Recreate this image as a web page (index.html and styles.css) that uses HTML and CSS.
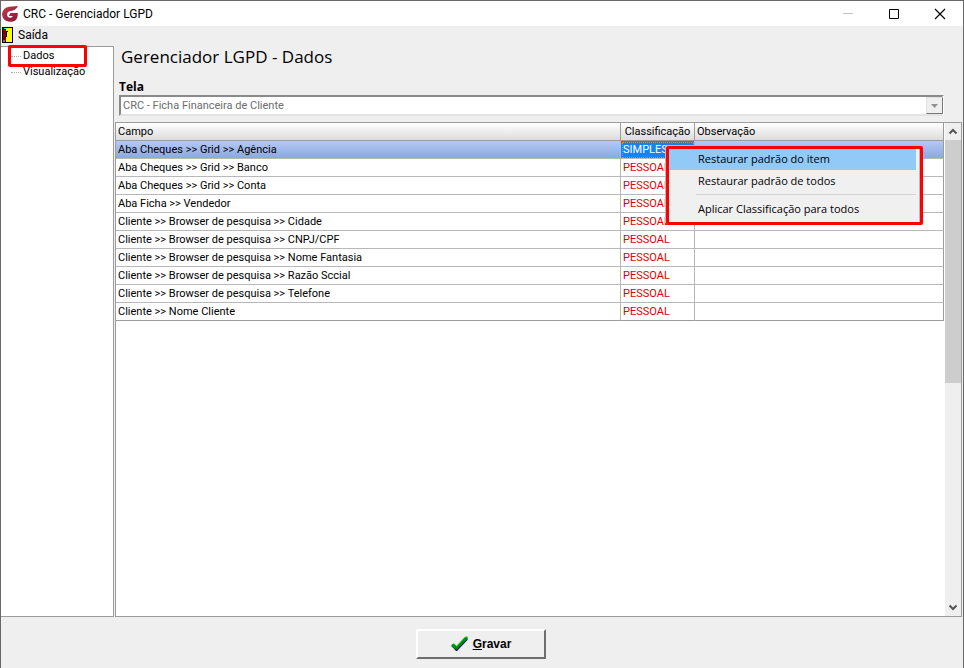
FILE: index.html
```html
<!DOCTYPE html>
<html lang="pt-BR">
<head>
<meta charset="utf-8">
<title>CRC - Gerenciador LGPD</title>
<link rel="stylesheet" href="styles.css">
</head>
<body>
<div class="window">
  <header class="titlebar">
    <svg class="logo" viewBox="0 0 16 16" aria-hidden="true">
      <defs><linearGradient id="g" x1="0" y1="0" x2="1" y2="1"><stop offset="0" stop-color="#c23a50"/><stop offset="1" stop-color="#8c1438"/></linearGradient></defs>
      <path fill="url(#g)" d="M15.800 0C12 .8 8 0 4.500 1.500C.2 3.500-.8 8 .8 11.500C2.500 15.500 7.500 16.500 11 15.500C14.800 14.500 15.800 11.500 15.800 7L8.500 7L6.800 10L10.800 10C10 12 7.500 12.300 6 11C4.500 9.500 4.900 6.500 7 5.500C9 4.700 14 5 15.800 0Z"/>
    </svg>
    <span class="caption">CRC - Gerenciador LGPD</span>
    <div class="controls">
      <button type="button" aria-label="Minimizar" disabled><svg viewBox="0 0 12 12"><path d="M1 5.500H11" stroke="#c4c4c4"/></svg></button>
      <button type="button" aria-label="Maximizar"><svg viewBox="0 0 12 12"><path d="M1.500 1.500H10.500V10.500H1.500Z" fill="none" stroke="#000"/></svg></button>
      <button type="button" aria-label="Fechar"><svg viewBox="0 0 12 12"><path d="M1 1L11 11M11 1L1 11" stroke="#000" stroke-width="1.200"/></svg></button>
    </div>
  </header>
  <nav class="menubar">
    <button type="button">
      <svg viewBox="0 0 11 16" shape-rendering="crispEdges" aria-hidden="true">
        <path d="M0 0H11V16H0Z"/><path d="M4 1H10V15H4Z" fill="#ff0"/><path d="M2 1H4V2H2Z" fill="#00e0e0"/><path d="M1 2H3V3H4V14H3V13H1Z" fill="#800010"/><path d="M4 4H6V5H5V10H4Z"/><path d="M1 13H3V15H1Z" fill="#777"/>
      </svg>
      <span>Saída</span>
    </button>
  </nav>
  <div class="workspace">
    <aside class="tree">
      <ul>
        <li><a href="#dados" class="marked">Dados</a></li>
        <li><a href="#visualizacao">Visualização</a></li>
      </ul>
    </aside>
    <main class="content">
      <section class="screen-form">
        <h1>Gerenciador LGPD - Dados</h1>
        <label for="tela">Tela</label>
        <div class="combo">
          <select id="tela" disabled><option>CRC - Ficha Financeira de Cliente</option></select>
          <span class="combo-arrow"><svg viewBox="0 0 7 4"><path d="M0 0H7L3.500 4Z" fill="#929292"/></svg></span>
        </div>
      </section>
      <section class="grid">
        <div class="grid-body">
          <table>
            <colgroup><col><col class="col-class"><col class="col-obs"></colgroup>
            <thead><tr><th>Campo</th><th class="center">Classificação</th><th>Observação</th></tr></thead>
            <tbody>
              <tr class="selected"><td>Aba Cheques &gt;&gt; Grid &gt;&gt; Agência</td>
                <td class="active">SIMPLES
                  <div class="popup" role="menu">
                    <button type="button" role="menuitem" class="hot">Restaurar padrão do item</button>
                    <button type="button" role="menuitem">Restaurar padrão de todos</button>
                    <hr>
                    <button type="button" role="menuitem">Aplicar Classificação para todos</button>
                  </div>
                </td><td></td></tr>
              <tr><td>Aba Cheques &gt;&gt; Grid &gt;&gt; Banco</td><td class="personal">PESSOAL</td><td></td></tr>
              <tr><td>Aba Cheques &gt;&gt; Grid &gt;&gt; Conta</td><td class="personal">PESSOAL</td><td></td></tr>
              <tr><td>Aba Ficha &gt;&gt; Vendedor</td><td class="personal">PESSOAL</td><td></td></tr>
              <tr><td>Cliente &gt;&gt; Browser de pesquisa &gt;&gt; Cidade</td><td class="personal">PESSOAL</td><td></td></tr>
              <tr><td>Cliente &gt;&gt; Browser de pesquisa &gt;&gt; CNPJ/CPF</td><td class="personal">PESSOAL</td><td></td></tr>
              <tr><td>Cliente &gt;&gt; Browser de pesquisa &gt;&gt; Nome Fantasia</td><td class="personal">PESSOAL</td><td></td></tr>
              <tr><td>Cliente &gt;&gt; Browser de pesquisa &gt;&gt; Razão Sccial</td><td class="personal">PESSOAL</td><td></td></tr>
              <tr><td>Cliente &gt;&gt; Browser de pesquisa &gt;&gt; Telefone</td><td class="personal">PESSOAL</td><td></td></tr>
              <tr><td>Cliente &gt;&gt; Nome Cliente</td><td class="personal">PESSOAL</td><td></td></tr>
            </tbody>
          </table>
        </div>
        <div class="scrollbar" aria-hidden="true">
          <svg viewBox="0 0 16 17"><path d="M4.500 10.500L8 7L11.500 10.500" fill="none" stroke="#555" stroke-width="2"/></svg>
          <div class="track"><div class="thumb"></div></div>
          <svg viewBox="0 0 16 17"><path d="M4.500 6.500L8 10L11.500 6.500" fill="none" stroke="#555" stroke-width="2"/></svg>
        </div>
      </section>
    </main>
  </div>
  <footer class="actions">
    <button type="button" class="save">
      <svg viewBox="0 0 17 16" aria-hidden="true"><path d="M.5 10L5 15H6L16.500 4V2L6 12L2 9Z" fill="#000080"/><path d="M.5 9L3 7.500L5.500 10L14 1L16.500 .5V3L6 13.500H5L.5 10.500Z" fill="#008a10"/><path d="M.8 8.800L3 8L5.500 10.500L14 1.500L16 1" fill="none" stroke="#00c810"/></svg>
      <span><u>G</u>ravar</span>
    </button>
  </footer>
</div>
</body>
</html>
```

FILE: styles.css
```css
* { box-sizing: border-box; }

body {
  margin: 0;
  font: 11px/14px Roboto, "Liberation Sans", sans-serif;
  color: #000;
}

button { font: inherit; color: inherit; background: none; border: 0; padding: 0; }
svg { display: block; }

.window {
  display: flex;
  flex-direction: column;
  height: 100vh;
  background: #efefef;
  border: 1px solid #686868;
  border-bottom: 0;
}

.titlebar {
  display: flex;
  align-items: center;
  height: 25px;
  padding-left: 1px;
  gap: 5px;
  background: #fff;
  font: 12px/16px Roboto, "Noto Sans", sans-serif;
}
.logo { width: 16px; height: 16px; }
.controls { display: flex; margin-left: auto; }
.controls button { display: grid; place-items: center; width: 46px; height: 25px; }
.controls svg { width: 12px; height: 12px; }

.menubar { height: 20px; font: 12px/18px Roboto, "Noto Sans", sans-serif; }
.menubar button { display: flex; align-items: center; gap: 5px; padding: 0 1px; }
.menubar svg { width: 11px; height: 16px; }

.workspace { display: flex; flex: 1; min-height: 0; gap: 1px; }

.tree {
  width: 113px;
  background: #fff;
  border: solid #9c9c9c;
  border-width: 1px 1px 1px 0;
}
.tree ul { list-style: none; margin: 0; padding: 1px 0 0 10px; }
.tree li { display: flex; align-items: center; height: 16px; line-height: 16px; }
.tree li::before { content: ""; width: 10px; margin-right: 2px; border-top: 1px dotted #aaa; }
.tree a { color: inherit; text-decoration: none; position: relative; }
.marked::after {
  content: "";
  position: absolute;
  inset: -3px -33px -3px -15px;
  border: 3px solid #f00;
  border-radius: 2px;
}

.content { flex: 1; min-width: 0; display: flex; flex-direction: column; }
.screen-form { display: flex; flex-direction: column; height: 76px; padding: 0 19px 0 4px; }
.screen-form h1 { margin: 0 0 11px 2px; font: 500 17px/22px "Open Sans", "Noto Sans", sans-serif; }
.screen-form label { font: 700 12px/16px "Open Sans", "Noto Sans", sans-serif; }
.combo { position: relative; height: 21px; }
.combo select {
  appearance: none;
  width: 100%;
  height: 21px;
  padding: 0 20px 0 2px;
  font: inherit;
  color: #6d6d6d;
  opacity: 1;
  background: #fff;
  border: 2px solid;
  border-color: #8a8a8a #fff #e3e3e3 #8a8a8a;
  border-radius: 0;
}
.combo-arrow {
  position: absolute;
  top: 2px;
  right: 1px;
  bottom: 2px;
  display: grid;
  place-items: center;
  width: 17px;
  background: #efefef;
  border: 1px solid;
  border-color: #e3e3e3 #777 #777 #e3e3e3;
}
.combo-arrow svg { width: 7px; height: 4px; }

.grid {
  flex: 1;
  min-height: 0;
  display: flex;
  gap: 1px;
  margin-right: 1px;
  background: #fff;
  border: 1px solid #9c9c9c;
}
.grid-body { flex: 1; min-width: 0; }
table { width: 100%; table-layout: fixed; border-collapse: separate; border-spacing: 0; }
.col-class { width: 74px; }
.col-obs { width: 249px; }
th, td {
  height: 18px;
  padding: 0 2px;
  text-align: left;
  font-weight: 400;
  line-height: 16px;
  white-space: nowrap;
  border-right: 1px solid #b8b8b8;
  border-bottom: 1px solid #b8b8b8;
}
th { background: linear-gradient(#fff, #dcdcdc); border-color: #9c9c9c; }
th.center { text-align: center; }
th:last-child, td:last-child { border-right-color: #9c9c9c; }
tbody tr:last-child td { border-bottom-color: #9c9c9c; }
.selected td { background: linear-gradient(#b5c9f1, #8ba8e5); }
.selected .active {
  position: relative;
  color: #fff;
  background: #1583f3;
  outline: 1px dotted #d98b28;
  outline-offset: -2px;
}
.personal { color: #e00000; }

.popup {
  position: absolute;
  z-index: 1;
  top: 4px;
  left: 44px;
  width: 255px;
  padding: 2px 3px;
  color: #000;
  background: #f0f0f0;
  border: 1px solid #bbb;
  font: 11px/22px "Open Sans", "Noto Sans", sans-serif;
}
.popup::after {
  content: "";
  position: absolute;
  inset: 0 -4px -3px 0;
  border: 3px solid #f00;
  border-radius: 2px;
  pointer-events: none;
}
.popup button { display: block; width: 100%; height: 22px; padding-left: 29px; text-align: left; }
.popup .hot { background: #91c9f7; }
.popup hr { margin: 2px 0 3px 27px; border: 0; border-top: 1px solid #d2d2d2; }

.scrollbar { display: flex; flex-direction: column; width: 16px; background: #efefef; }
.scrollbar svg { width: 16px; height: 17px; }
.track { flex: 1; }
.thumb { height: 53%; background: #cdcdcd; }

.actions { display: flex; justify-content: center; align-items: flex-start; height: 51px; padding: 12px 2px 0 0; }
.save {
  display: flex;
  align-items: center;
  justify-content: center;
  gap: 5px;
  width: 130px;
  height: 30px;
  font: 700 12px/16px "Liberation Sans", Arial, sans-serif;
  border: 2px solid;
  border-color: #fff #6d6d6d #6d6d6d #fff;
}
.save svg { width: 17px; height: 16px; }
```
